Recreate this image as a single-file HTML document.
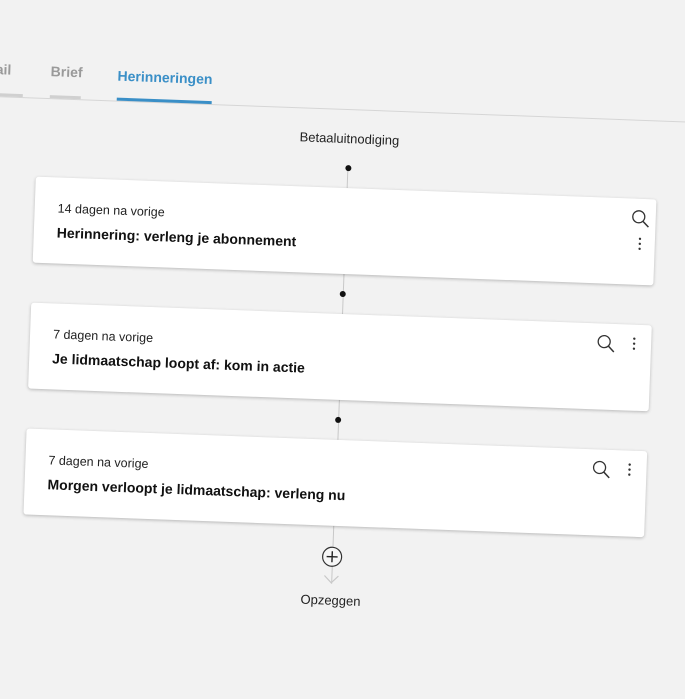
<!DOCTYPE html>
<html><head><meta charset="utf-8"><style>
html,body{margin:0;padding:0;width:685px;height:685px;overflow:hidden;background:#f2f2f2;font-family:"Liberation Sans",Arial,sans-serif;}
#f{position:absolute;left:0;top:0;width:685px;height:685px;transform:rotate(2.1deg);transform-origin:342px 342px;}
.a{position:absolute;}
.tab{font-weight:bold;font-size:14px;color:#9a9a9a;transform:translateY(-50%);}
.card{position:absolute;left:30px;width:621px;height:86px;background:#fff;border-radius:3px;box-shadow:0 1px 3px rgba(0,0,0,.25);}
.sub{position:absolute;left:23px;top:24px;font-size:12.5px;color:#222;}
.tit{position:absolute;left:23px;top:47px;font-size:14px;font-weight:bold;color:#111;}
.dot{position:absolute;width:6px;height:6px;border-radius:50%;background:#111;}
.vl{position:absolute;width:1px;background:#c8c8c8;}
</style></head><body>
<div id="f">
<div class="a" style="left:-60px;top:109px;width:800px;height:1px;background:#d6d6d6"></div>
<div class="a tab" style="left:-14px;top:82px">ail</div>
<div class="a" style="left:-14px;top:106px;width:28px;height:3px;background:#d0d0d0"></div>
<div class="a tab" style="left:41px;top:82px">Brief</div>
<div class="a" style="left:41px;top:106px;width:31px;height:3px;background:#d0d0d0"></div>
<div class="a tab" style="left:108px;top:84px;color:#3a8fc7">Herinneringen</div>
<div class="a" style="left:108px;top:106px;width:95px;height:3px;background:#3a8fc7"></div>

<div class="a" style="left:242px;width:200px;text-align:center;top:131px;font-size:13px;color:#222">Betaaluitnodiging</div>
<div class="vl" style="left:341px;top:168px;height:20px"></div>
<div class="dot" style="left:339px;top:165px"></div>
<div class="vl" style="left:341px;top:274px;height:40px"></div>
<div class="dot" style="left:338px;top:291px"></div>
<div class="vl" style="left:341px;top:400px;height:40px"></div>
<div class="dot" style="left:338px;top:417px"></div>
<div class="vl" style="left:340px;top:526px;height:58px"></div>

<div class="card" style="top:188px">
<div class="sub">14 dagen na vorige</div>
<div class="tit">Herinnering: verleng je abonnement</div>
<svg class="a" style="left:596px;top:10px" width="20" height="20" viewBox="0 0 20 20"><circle cx="8" cy="8" r="6" fill="none" stroke="#333" stroke-width="1.3"/><path d="M12.5 12.5L18 18" stroke="#333" stroke-width="1.5"/></svg>
<svg class="a" style="left:603px;top:38px" width="6" height="14"><circle cx="3" cy="2" r="1.2" fill="#333"/><circle cx="3" cy="7" r="1.2" fill="#333"/><circle cx="3" cy="12" r="1.2" fill="#333"/></svg>
</div>
<div class="card" style="top:314px">
<div class="sub">7 dagen na vorige</div>
<div class="tit">Je lidmaatschap loopt af: kom in actie</div>
<svg class="a" style="left:566px;top:10px" width="20" height="20" viewBox="0 0 20 20"><circle cx="8" cy="8" r="6" fill="none" stroke="#333" stroke-width="1.3"/><path d="M12.5 12.5L18 18" stroke="#333" stroke-width="1.5"/></svg>
<svg class="a" style="left:601px;top:12px" width="6" height="14"><circle cx="3" cy="2" r="1.2" fill="#333"/><circle cx="3" cy="7" r="1.2" fill="#333"/><circle cx="3" cy="12" r="1.2" fill="#333"/></svg>
</div>
<div class="card" style="top:440px">
<div class="sub">7 dagen na vorige</div>
<div class="tit">Morgen verloopt je lidmaatschap: verleng nu</div>
<svg class="a" style="left:566px;top:10px" width="20" height="20" viewBox="0 0 20 20"><circle cx="8" cy="8" r="6" fill="none" stroke="#333" stroke-width="1.3"/><path d="M12.5 12.5L18 18" stroke="#333" stroke-width="1.5"/></svg>
<svg class="a" style="left:601px;top:12px" width="6" height="14"><circle cx="3" cy="2" r="1.2" fill="#333"/><circle cx="3" cy="7" r="1.2" fill="#333"/><circle cx="3" cy="12" r="1.2" fill="#333"/></svg>
</div>

<svg class="a" style="left:329px;top:546px" width="22" height="22" viewBox="0 0 22 22"><circle cx="11" cy="11" r="9.5" fill="#f7f7f7" stroke="#333" stroke-width="1.2"/><path d="M11 5.5V16.5M5.5 11H16.5" stroke="#222" stroke-width="1.4"/></svg>
<svg class="a" style="left:332px;top:575px" width="16" height="10" viewBox="0 0 16 10"><path d="M1 1L8 8L15 1" fill="none" stroke="#c8c8c8" stroke-width="1.2"/></svg>
<div class="a" style="left:240px;width:200px;text-align:center;top:593px;font-size:13px;color:#222">Opzeggen</div>
</div>
</body></html>
